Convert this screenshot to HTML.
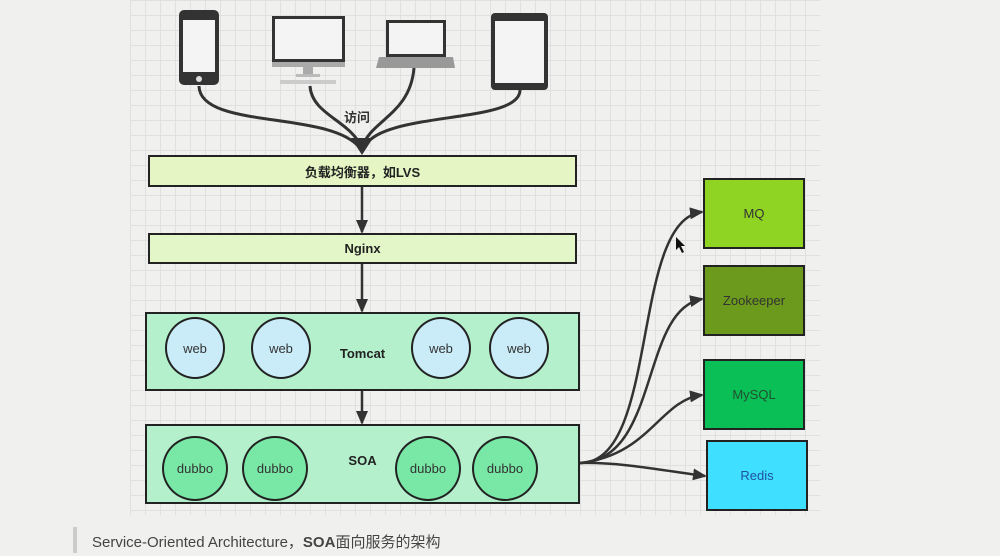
<!DOCTYPE html>
<html><head><meta charset="utf-8"><style>
body{margin:0;width:1000px;height:556px;background:#f0f0ef;position:relative;overflow:hidden;font-family:"Liberation Sans","Noto Sans CJK SC",sans-serif}
.grid{position:absolute;left:130px;top:0;width:690px;height:515px;background-color:#f0f0ef;background-image:linear-gradient(#e0e0e0 1px,transparent 1px),linear-gradient(90deg,#e0e0e0 1px,transparent 1px);background-size:15px 15px}
.b{position:absolute;border:2px solid #222;box-sizing:border-box;display:flex;align-items:center;justify-content:center;font-size:13px;color:#222}
.c{position:absolute;border:2px solid #222;border-radius:50%;box-sizing:border-box;display:flex;align-items:center;justify-content:center;font-size:13px;color:#333}
</style></head><body>
<div class="grid"></div>
<svg width="1000" height="556" style="position:absolute;left:0;top:0">
<defs><marker id="a" markerWidth="14" markerHeight="12" refX="12" refY="6" orient="auto" markerUnits="userSpaceOnUse"><path d="M0,0 L14,6 L0,12z" fill="#333"/></marker></defs>
<rect x="179" y="10" width="40" height="75" rx="5" fill="#333"/><rect x="183" y="20" width="32" height="52" fill="#f4f4f4"/><circle cx="199" cy="79" r="3" fill="#ddd"/>
<rect x="272" y="16" width="73" height="51" fill="#333"/><rect x="275" y="19" width="67" height="40" fill="#f4f4f4"/><rect x="272" y="62" width="73" height="5" fill="#aaa"/><rect x="303" y="67" width="10" height="8" fill="#aaa"/><rect x="296" y="74" width="24" height="3" fill="#bbb"/><rect x="280" y="80" width="56" height="4" fill="#ccc"/>
<rect x="386" y="20" width="60" height="37" fill="#333"/><rect x="389" y="23" width="54" height="31" fill="#f4f4f4"/><path d="M379,57 L453,57 L455,68 L376,68z" fill="#999"/>
<rect x="491" y="13" width="57" height="77" rx="4" fill="#333"/><rect x="495" y="21" width="49" height="62" fill="#f4f4f4"/>
<g fill="none" stroke="#333" stroke-width="3">
<path d="M199,86 C200,130 330,110 360,148"/>
<path d="M310,86 C312,115 350,120 362,148"/>
<path d="M414,68 C410,115 370,120 362,148"/>
<path d="M520,90 C520,125 380,110 364,148"/>
</g>
<path d="M351,138 L373,138 L362,155z" fill="#333"/>
<g stroke="#333" stroke-width="2.5" fill="none" marker-end="url(#a)">
<path d="M362,187 L362,232"/><path d="M362,264 L362,311"/><path d="M362,391 L362,423"/>
<path d="M580,463 C660,463 630,220 702,212"/>
<path d="M580,463 C660,460 640,310 702,299"/>
<path d="M580,463 C650,455 660,400 702,395"/>
<path d="M580,463 C620,462 660,470 705,476"/>
</g>
<path d="M676,237 L676,250 L679,247 L682,253 L684,252 L681,246 L685,246z" fill="#111"/>
</svg>
<div style="position:absolute;left:344px;top:107px;font-size:13px;font-weight:bold;color:#333">访问</div>
<div class="b" style="left:148px;top:155px;width:429px;height:32px;background:#e5f6c4;font-weight:bold">负载均衡器，如LVS</div>
<div class="b" style="left:148px;top:233px;width:429px;height:31px;background:#e2f6c8;font-weight:bold">Nginx</div>
<div class="b" style="left:145px;top:312px;width:435px;height:79px;background:#b5f0cd;font-weight:bold;padding-top:4px">Tomcat</div>
<div class="b" style="left:145px;top:424px;width:435px;height:80px;background:#b5f0cd;font-weight:bold;padding-bottom:8px">SOA</div>
<div class="c" style="left:165px;top:317px;width:60px;height:62px;background:#c9ecf8">web</div>
<div class="c" style="left:251px;top:317px;width:60px;height:62px;background:#c9ecf8">web</div>
<div class="c" style="left:411px;top:317px;width:60px;height:62px;background:#c9ecf8">web</div>
<div class="c" style="left:489px;top:317px;width:60px;height:62px;background:#c9ecf8">web</div>
<div class="c" style="left:162px;top:436px;width:66px;height:65px;background:#79e8a6">dubbo</div>
<div class="c" style="left:242px;top:436px;width:66px;height:65px;background:#79e8a6">dubbo</div>
<div class="c" style="left:395px;top:436px;width:66px;height:65px;background:#79e8a6">dubbo</div>
<div class="c" style="left:472px;top:436px;width:66px;height:65px;background:#79e8a6">dubbo</div>
<div class="b" style="left:703px;top:178px;width:102px;height:71px;background:#8fd323;color:#333">MQ</div>
<div class="b" style="left:703px;top:265px;width:102px;height:71px;background:#6b9a1c;color:#333">Zookeeper</div>
<div class="b" style="left:703px;top:359px;width:102px;height:71px;background:#0abf55;color:#205030">MySQL</div>
<div class="b" style="left:706px;top:440px;width:102px;height:71px;background:#3fe0ff;color:#2050a0">Redis</div>
<div style="position:absolute;left:73px;top:527px;width:4px;height:26px;background:#ccc"></div>
<div style="position:absolute;left:92px;top:531px;font-size:15px;color:#444">Service-Oriented Architecture，<b>SOA</b>面向服务的架构</div>
</body></html>
